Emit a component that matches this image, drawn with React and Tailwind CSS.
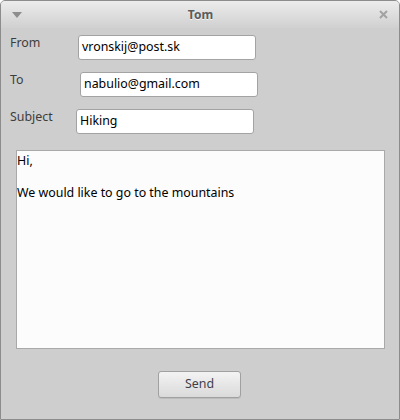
import React from 'react';

const fields = [
  { label: 'From', value: 'vronskij@post.sk', labelW: 'w-[68px]', mt: 'mt-[7px]' },
  { label: 'To', value: 'nabulio@gmail.com', labelW: 'w-[70px]', mt: 'mt-[12px]' },
  { label: 'Subject', value: 'Hiking', labelW: 'w-[66px]', mt: 'mt-[12px]' },
];

const App = () => {
  return (
    <div
      className="w-[400px] h-[420px] bg-[#cecece] border border-[#8c8c8c] rounded-t-[5px] flex flex-col overflow-hidden"
      style={{ fontFamily: '"Noto Sans", "Open Sans", sans-serif' }}
    >
      {/* Title bar */}
      <div className="h-[27px] shrink-0 flex items-center justify-between px-[10px] bg-gradient-to-b from-[#ececec] to-[#d0d0d0]">
        <svg width="10" height="6" viewBox="0 0 10 6" className="ml-[1px]">
          <path d="M0 0 H10 L5 6 Z" fill="#8d8d8d" />
        </svg>
        <span className="text-[12px] font-bold text-[#5b5b5b] leading-none [text-shadow:0_1px_0_#f4f4f4]">Tom</span>
        <svg width="9" height="9" viewBox="0 0 9 9" className="mr-[1px]">
          <path d="M1 1 L8 8 M8 1 L1 8" stroke="#a2a2a2" strokeWidth="2" />
        </svg>
      </div>

      {/* Form */}
      <div className="flex-1 flex flex-col pl-[9px]">
        {fields.map((f) => (
          <div key={f.label} className={`flex items-start ${f.mt}`}>
            <span className={`${f.labelW} text-[12.4px] leading-[15px] text-[#3d3d3d]`}>{f.label}</span>
            <div className="w-[178px] h-[25px] bg-white border border-[#a3a3a3] rounded-[3px] px-[3px] flex items-center text-[12.4px] text-black">
              {f.value}
            </div>
          </div>
        ))}

        {/* Message */}
        <div className="mt-[16px] ml-[6px] w-[369px] h-[199px] bg-[#fcfcfc] border border-[#a9a9a9] pt-[2px] text-[12.4px] leading-[16px] text-black">
          <p>Hi,</p>
          <p>&nbsp;</p>
          <p>We would like to go to the mountains</p>
        </div>

        {/* Send */}
        <div className="mt-[21px] ml-[148px]">
          <button className="w-[83px] h-[27px] rounded-[3px] border border-[#a0a0a0] bg-gradient-to-b from-[#f3f3f3] to-[#dadada] text-[12.4px] text-[#3f3f4a] shadow-[0_1px_0_#bdbdbd]">
            Send
          </button>
        </div>
      </div>
    </div>
  );
};

export default App;
